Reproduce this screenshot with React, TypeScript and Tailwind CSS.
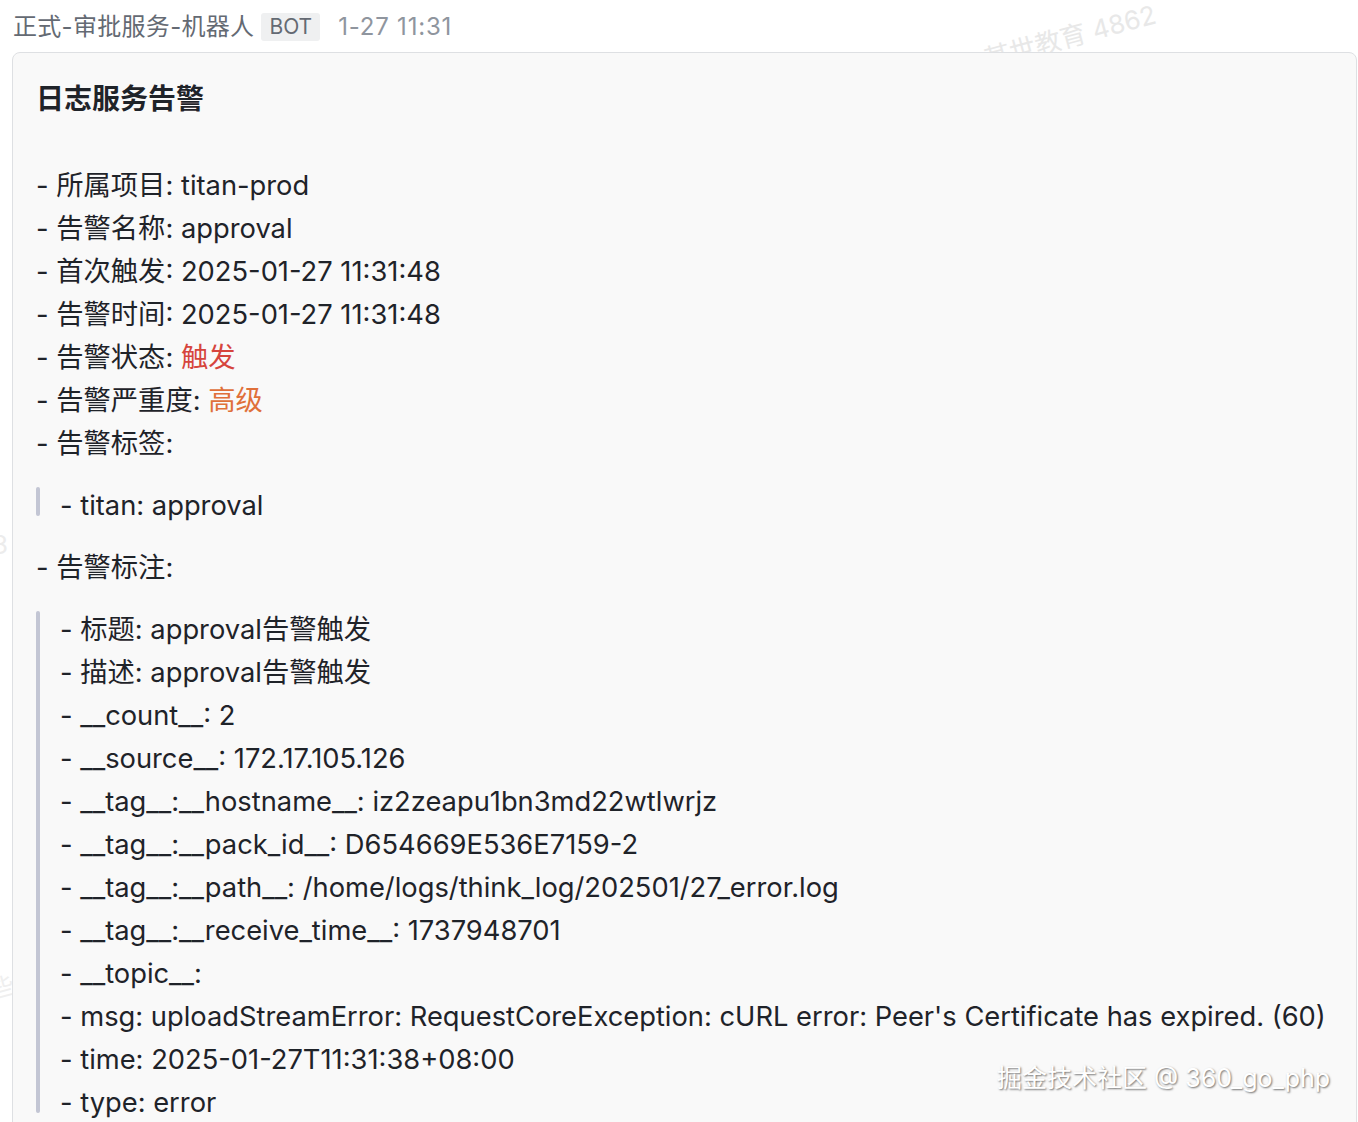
import React from 'react';

const font = 'font-[Inter,"Noto_Sans_CJK_SC",sans-serif]';

type Line = { label: string; value?: React.ReactNode };

const topLines: Line[] = [
  { label: '所属项目', value: 'titan-prod' },
  { label: '告警名称', value: 'approval' },
  { label: '首次触发', value: '2025-01-27 11:31:48' },
  { label: '告警时间', value: '2025-01-27 11:31:48' },
  { label: '告警状态', value: <span className="text-[#d6453d]">触发</span> },
  { label: '告警严重度', value: <span className="text-[#e0703a]">高级</span> },
  { label: '告警标签' },
];

const notes = [
  '标题: approval告警触发',
  '描述: approval告警触发',
  '__count__: 2',
  '__source__: 172.17.105.126',
  '__tag__:__hostname__: iz2zeapu1bn3md22wtlwrjz',
  '__tag__:__pack_id__: D654669E536E7159-2',
  '__tag__:__path__: /home/logs/think_log/202501/27_error.log',
  '__tag__:__receive_time__: 1737948701',
  '__topic__:',
  "msg: uploadStreamError: RequestCoreException: cURL error: Peer's Certificate has expired. (60)",
  'time: 2025-01-27T11:31:38+08:00',
  'type: error',
];

function Quote({ items }: { items: string[] }) {
  return (
    <div className="flex">
      <div className="w-[4px] bg-[#c3c6d4] rounded-sm mt-[3px] mb-[11px] shrink-0" />
      <div className="pl-[20px]">
        {items.map((t) => (
          <div key={t} className="h-[43px] leading-[43px] whitespace-nowrap">
            - {t}
          </div>
        ))}
      </div>
    </div>
  );
}

export default function App() {
  return (
    <div className={`relative w-[1358px] h-[1122px] overflow-hidden bg-white ${font}`}>
      <div className="absolute left-[982px] top-[17px] -rotate-[15deg] text-[26px] text-[#e8e8e8] whitespace-nowrap">
        某世教育 4862
      </div>
      <div className="absolute -left-[8px] top-[525px] text-[26px] text-[#ececec]">3</div>
      <div className="absolute -left-[10px] top-[970px] -rotate-[15deg] text-[24px] text-[#efefef]">些</div>

      <div className="relative z-10 flex items-center h-[52px] pl-[13px] pt-[2px]">
        <span className="text-[24px] text-[#646a73] tracking-[0.3px]">正式-审批服务-机器人</span>
        <span className="ml-[7px] px-[8px] h-[28px] leading-[28px] bg-[#eff0f1] text-[#646a73] text-[21px] rounded-[3px]">
          BOT
        </span>
        <span className="ml-[18px] text-[24px] text-[#8f959e] tracking-[0.8px]">1-27 11:31</span>
      </div>

      <div className="relative z-10 ml-[12px] mr-[1px] h-[1200px] rounded-[8px] border border-[#dee0e3] bg-[#f9f9f9] pl-[23px] text-[#1f2329] text-[27.3px]">
        <div className="h-[96px] flex items-center pb-[4px] text-[28px] font-bold">日志服务告警</div>
        <div className="mt-[15px]">
          {topLines.map((l) => (
            <div key={l.label} className="h-[43px] leading-[43px] whitespace-nowrap">
              - {l.label}: {l.value}
            </div>
          ))}
        </div>
        <div className="mt-[19px]">
          <Quote items={['titan: approval']} />
        </div>
        <div className="mt-[19px] h-[43px] leading-[43px]">- 告警标注:</div>
        <div className="mt-[19px]">
          <Quote items={notes} />
        </div>
      </div>

      <div className="absolute z-20 left-[997px] top-[1060px] text-[25px] text-white whitespace-nowrap [text-shadow:1px_1px_2px_rgba(0,0,0,0.55)]">
        掘金技术社区 @ 360_go_php
      </div>
    </div>
  );
}
